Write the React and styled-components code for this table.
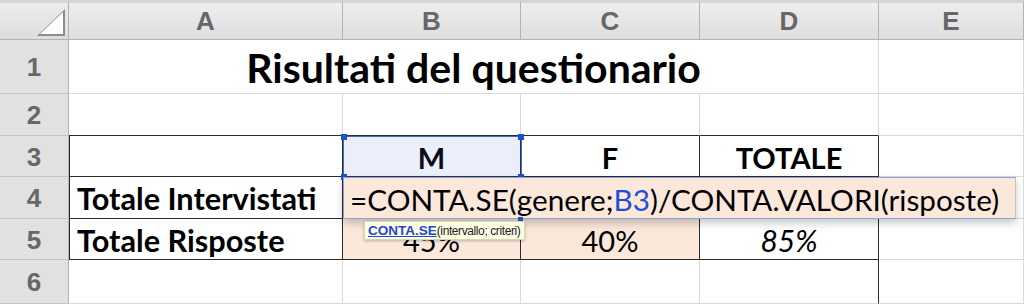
import React from "react";
import styled, { createGlobalStyle, css } from "styled-components";

const GlobalStyle = createGlobalStyle`
  html, body {
    margin: 0;
    padding: 0;
    background: #fff;
  }
  * { box-sizing: border-box; }
`;

const COLS = ["A", "B", "C", "D", "E"];
const LINE = "#d9d9d9";
const DARK = "#2b2b2b";
const PEACH = "#fbe8db";

// ---- sheet grid ----
const Sheet = styled.div`
  position: relative;
  width: 1024px;
  height: 304px;
  overflow: hidden;
  display: grid;
  grid-template-columns: 69px 274px 178px 179px 179px 1fr;
  grid-template-rows: 40px 54px 42px 41px 42px 41px 1fr;
  font-family: Lato, "Open Sans", sans-serif;
  color: #000;
`;

const Corner = styled.div`
  background: linear-gradient(#ececec, #dddddd);
  border-top: 3px solid #d6d6d6;
  border-right: 1px solid #b3b3b3;
  border-bottom: 1px solid #b3b3b3;
  display: flex;
  align-items: flex-end;
  justify-content: flex-end;
  padding: 0 2px 2px 0;
`;

const ColHead = styled.div`
  background: linear-gradient(#eeeeee, #dedede);
  border-top: 3px solid #d6d6d6;
  border-right: 1px solid #b3b3b3;
  border-bottom: 1px solid #b3b3b3;
  display: flex;
  align-items: center;
  justify-content: center;
  font-family: "Liberation Sans", Arial, sans-serif;
  font-weight: 700;
  font-size: 26px;
  color: #676767;
  padding-top: 1px;
`;

const RowHead = styled.div`
  background: #e1e1e1;
  border-right: 1px solid #b3b3b3;
  border-bottom: 1px solid #c6c6c6;
  display: flex;
  align-items: center;
  justify-content: center;
  font-family: "Liberation Sans", Arial, sans-serif;
  font-weight: 700;
  font-size: 26px;
  color: #676767;
  padding-top: 2px;
`;

const Cell = styled.div`
  display: flex;
  align-items: center;
  justify-content: ${(p) => p.$align || "center"};
  padding: 2px 7px 0;
  background: ${(p) => p.$fill || "#fff"};
  border-right: 1px solid ${(p) => (p.$darkRight ? DARK : LINE)};
  border-bottom: 1px solid ${(p) => (p.$darkBottom ? DARK : LINE)};
  ${(p) => p.$darkLeft && css`border-left: 1px solid ${DARK};`}
  font-size: ${(p) => p.$size || 29}px;
  font-weight: ${(p) => (p.$bold ? 700 : 400)};
  font-style: ${(p) => (p.$italic ? "italic" : "normal")};
  white-space: nowrap;
  ${(p) => p.$span && css`grid-column: span ${p.$span};`}
`;

const Title = styled(Cell)`
  font-size: 41px;
  font-weight: 700;
  padding-top: 2px;
`;

// ---- overlays on top of the grid ----
const Selection = styled.div`
  position: absolute;
  left: 343px;
  top: 136px;
  width: 179px;
  height: 42px;
  border: 1px solid #3d6ad6;
  background: rgba(70, 100, 220, 0.11);
  pointer-events: none;
`;

const Handle = styled.span`
  position: absolute;
  width: 6px;
  height: 6px;
  background: #1f4fd1;
  ${(p) => (p.$top ? "top: -3px;" : "bottom: -3px;")}
  ${(p) => (p.$left ? "left: -3px;" : "right: -3px;")}
`;

const Editor = styled.div`
  position: absolute;
  left: 343px;
  top: 177px;
  width: 673px;
  height: 42px;
  background: ${PEACH};
  border: 1px solid #8ea3d6;
  border-right-color: #c9c0b8;
  box-shadow: 0 4px 8px rgba(0, 0, 0, 0.22);
  display: flex;
  align-items: center;
  padding: 2px 0 0 6px;
  font-size: 29.7px;
  color: #000;
  white-space: nowrap;
`;

const Ref = styled.span`
  color: #1d4fd8;
`;

const Hint = styled.div`
  position: absolute;
  left: 364px;
  top: 221px;
  height: 19px;
  padding: 0 4px 0 3px;
  background: #fdfde3;
  border: 1px solid #d8d8b0;
  box-shadow: 0 1px 3px rgba(0, 0, 0, 0.25);
  display: flex;
  align-items: center;
  font-family: "Liberation Sans", Arial, sans-serif;
  font-size: 12px;
  letter-spacing: -0.4px;
  color: #222;
  white-space: nowrap;
`;

const FnLink = styled.span`
  color: #1f47d8;
  font-size: 13.5px;
  font-weight: 700;
  letter-spacing: 0;
  text-decoration: underline;
`;

const SmallHandle = styled.span`
  position: absolute;
  left: 518px;
  top: 217px;
  width: 5px;
  height: 5px;
  background: #1f4fd1;
`;

function CornerMark() {
  return (
    <svg width="30" height="28" viewBox="0 0 30 28">
      <polygon points="29,0 29,27 1,27" fill="#8c8c8c" />
      <polygon points="27,3 27,25 4,25" fill="#fff" />
    </svg>
  );
}

export default function App() {
  return (
    <>
      <GlobalStyle />
      <Sheet>
        <Corner>
          <CornerMark />
        </Corner>
        {COLS.map((c) => (
          <ColHead key={c}>{c}</ColHead>
        ))}

        {/* row 1 */}
        <RowHead>1</RowHead>
        <Title $span={4}>Risultati del questionario</Title>
        <Cell />

        {/* row 2 */}
        <RowHead>2</RowHead>
        <Cell $darkBottom />
        <Cell $darkBottom />
        <Cell $darkBottom />
        <Cell $darkBottom />
        <Cell />

        {/* row 3 */}
        <RowHead>3</RowHead>
        <Cell $darkLeft $darkRight $darkBottom />
        <Cell $darkRight $darkBottom $bold>M</Cell>
        <Cell $darkRight $darkBottom $bold>F</Cell>
        <Cell $darkRight $darkBottom $bold>TOTALE</Cell>
        <Cell />

        {/* row 4 */}
        <RowHead>4</RowHead>
        <Cell $darkLeft $darkRight $darkBottom $bold $size={30.7} $align="flex-start">
          Totale Intervistati
        </Cell>
        <Cell $darkRight $darkBottom $fill={PEACH} />
        <Cell $darkRight $darkBottom $fill={PEACH} />
        <Cell $darkRight $darkBottom />
        <Cell />

        {/* row 5 */}
        <RowHead>5</RowHead>
        <Cell $darkLeft $darkRight $darkBottom $bold $size={30.7} $align="flex-start">
          Totale Risposte
        </Cell>
        <Cell $darkRight $darkBottom $fill={PEACH}>45%</Cell>
        <Cell $darkRight $darkBottom $fill={PEACH}>40%</Cell>
        <Cell $darkRight $darkBottom $italic $size={30}>85%</Cell>
        <Cell />

        {/* row 6 */}
        <RowHead>6</RowHead>
        <Cell />
        <Cell />
        <Cell />
        <Cell $darkRight />
        <Cell />

        <Selection>
          <Handle $top $left />
          <Handle $top />
          <Handle $left />
          <Handle />
        </Selection>
        <Editor>
          =CONTA.SE(genere;<Ref>B3</Ref>)/CONTA.VALORI(risposte)
        </Editor>
        <SmallHandle />
        <Hint>
          <FnLink>CONTA.SE</FnLink>(intervallo; criteri)
        </Hint>
      </Sheet>
    </>
  );
}
